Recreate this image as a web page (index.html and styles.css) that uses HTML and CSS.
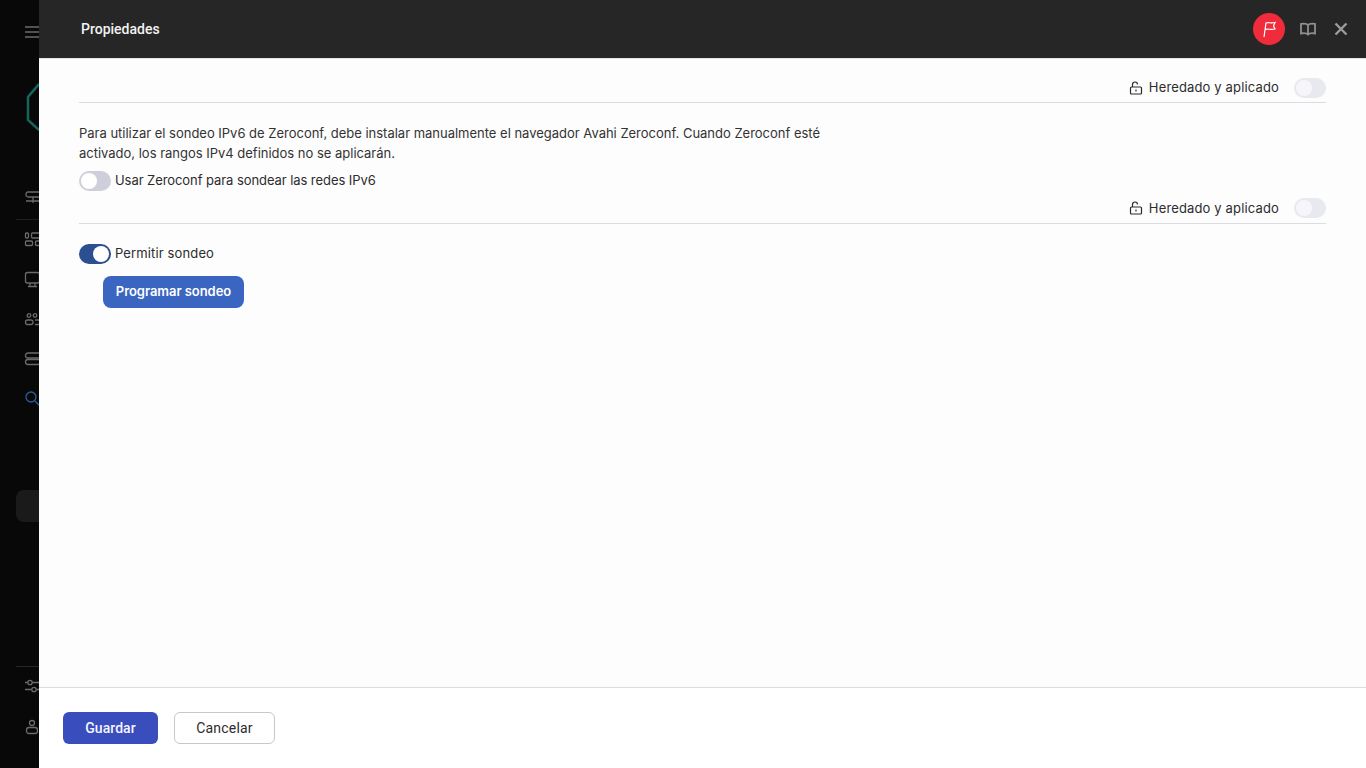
FILE: index.html
```html
<!DOCTYPE html>
<html lang="es">
<head>
<meta charset="utf-8">
<title>Propiedades</title>
<link rel="stylesheet" href="styles.css">
</head>
<body>
<div class="app">
  <aside class="sidebar">
    <svg class="side-icon burger" width="16" height="12" viewBox="0 0 16 12"><path d="M0 1h16M0 6h16M0 11h16"/></svg>
    <svg class="logo" width="30" height="50" viewBox="0 0 30 50"><path d="M16 2 5 15v23l11 10"/></svg>
    <svg class="side-icon first" width="18" height="16" viewBox="0 0 18 16"><rect x="1" y="1" width="16" height="5" rx="2"/><path d="M8 6v6M1 10h16"/></svg>
    <div class="side-rule"></div>
    <svg class="side-icon nav" width="18" height="16" viewBox="0 0 18 16"><rect x="0.500" y="1" width="3" height="5" rx="1"/><rect x="6.500" y="1" width="9" height="5" rx="1"/><rect x="0.500" y="9" width="7" height="4.500" rx="1"/><rect x="10.500" y="9" width="6" height="4.500" rx="1"/></svg>
    <svg class="side-icon nav" width="18" height="16" viewBox="0 0 18 16"><rect x="0.500" y="0.500" width="14" height="10.500" rx="2"/><path d="M5 11v3M10 11v3M3 14.500h9"/></svg>
    <svg class="side-icon nav" width="18" height="16" viewBox="0 0 18 16"><circle cx="4" cy="3.500" r="1.800"/><circle cx="10" cy="3.500" r="1.800"/><rect x="0.500" y="8" width="7.500" height="4.500" rx="2"/><path d="M10 8h3a2.200 2.200 0 0 1 0 4.500h-3"/></svg>
    <svg class="side-icon nav" width="18" height="16" viewBox="0 0 18 16"><rect x="0.500" y="1" width="15" height="5" rx="2.500"/><rect x="0.500" y="7.500" width="15" height="5" rx="2.500"/></svg>
    <svg class="side-icon search" width="18" height="18" viewBox="0 0 18 18"><circle cx="6" cy="7" r="5"/><path d="m10 11 6 6"/></svg>
    <div class="side-active"></div>
    <div class="side-rule bottom"></div>
    <svg class="side-icon sliders" width="18" height="16" viewBox="0 0 18 16"><path d="M0 2.500h2.500M7.500 2.500H18M0 9.500h6.500M11.500 9.500H18"/><circle cx="5" cy="2.500" r="2.200"/><circle cx="9" cy="9.500" r="2.200"/></svg>
    <svg class="side-icon user" width="14" height="16" viewBox="0 0 14 16"><circle cx="7" cy="3" r="2.500"/><rect x="1.500" y="7.500" width="11" height="6" rx="2.500"/></svg>
  </aside>

  <main class="panel">
    <header class="panel-header">
      <h1 class="panel-title">Propiedades</h1>
      <div class="header-actions">
        <span class="flag-badge">
          <svg width="16" height="18" viewBox="0 0 16 18"><path d="M3 17 5 3C8 1.500 9 4 14 2.500L12.500 6 14 9C9 10.500 8 8 4 9.500"/></svg>
        </span>
        <svg class="head-icon" width="16" height="14" viewBox="0 0 16 14"><path d="M8 3C6.500 1.500 4 1.500 1 2v9.500C4 11 6.500 11 8 12.500 9.500 11 12 11 15 11.500V2C12 1.500 9.500 1.500 8 3zM8 3v9.500"/></svg>
        <svg class="head-icon close" width="14" height="14" viewBox="0 0 14 14"><path d="m1.500 1.500 11 11M12.500 1.500l-11 11"/></svg>
      </div>
    </header>

    <div class="panel-body">
      <div class="inherit-row">
        <svg class="lock" width="14" height="14" viewBox="0 0 14 14"><path d="M3.500 6V3.500a2.500 2.500 0 0 1 5 0"/><rect x="1.500" y="6" width="11" height="7" rx="1"/><path d="M7 8.500v2"/></svg>
        <span class="inherit-text">Heredado y aplicado</span>
        <span class="toggle toggle-faint"><span class="knob"></span></span>
      </div>

      <p class="note">Para utilizar el sondeo IPv6 de Zeroconf, debe instalar manualmente el navegador Avahi Zeroconf. Cuando Zeroconf esté activado, los rangos IPv4 definidos no se aplicarán.</p>
      <div class="switch-row">
        <span class="toggle toggle-off"><span class="knob"></span></span>
        <span class="label-zeroconf">Usar Zeroconf para sondear las redes IPv6</span>
      </div>

      <div class="inherit-row second">
        <svg class="lock" width="14" height="14" viewBox="0 0 14 14"><path d="M3.500 6V3.500a2.500 2.500 0 0 1 5 0"/><rect x="1.500" y="6" width="11" height="7" rx="1"/><path d="M7 8.500v2"/></svg>
        <span class="inherit-text">Heredado y aplicado</span>
        <span class="toggle toggle-faint"><span class="knob"></span></span>
      </div>

      <div class="switch-row allow">
        <span class="toggle toggle-on"><span class="knob"></span></span>
        <span class="label-allow">Permitir sondeo</span>
      </div>
      <button class="btn-schedule" type="button">Programar sondeo</button>
    </div>

    <footer class="panel-footer">
      <button class="btn btn-save" type="button">Guardar</button>
      <button class="btn btn-cancel" type="button">Cancelar</button>
    </footer>
  </main>
</div>
</body>
</html>
```
FILE: styles.css
```css
* { box-sizing: border-box; }
html, body { margin: 0; height: 100%; overflow: hidden; }
body { font-family: "Inter", "Liberation Sans", sans-serif; font-size: 13px; color: #2c2c2e; }

.app { display: flex; width: 1366px; height: 768px; }

.sidebar {
  width: 39px; flex: none; height: 768px; background: #080808; overflow: hidden;
  display: flex; flex-direction: column; padding-left: 25px;
}
.side-icon { flex: none; fill: none; stroke: #6b6b6b; stroke-width: 1.300; overflow: visible; }
.burger { margin-top: 26px; }
.logo { flex: none; margin: 44px 0 0 -2px; fill: none; stroke: #14665c; stroke-width: 2.500; overflow: visible; }
.first { margin-top: 59px; }
.side-rule { flex: none; width: 30px; height: 1px; margin: 12px 0 0 -9px; background: #1e1e1e; }
.nav { margin-top: 12px; margin-bottom: 12px; }
.search { margin-top: 10px; stroke: #2f5a9e; }
.side-active { flex: none; width: 40px; height: 32px; margin: 82px 0 0 -9px; border-radius: 8px; background: #1a1a1a; }
.side-rule.bottom { margin-top: 144px; background: #262626; }
.sliders { margin-top: 13px; }
.user { margin-top: 24px; }

.panel { flex: 1; min-width: 0; display: flex; flex-direction: column; background: #fdfdfd; }

.panel-header {
  flex: none; height: 59px; background: #262626; border-bottom: 1px solid #e4e4e4;
  display: flex; align-items: center; justify-content: space-between; padding: 0 18px 0 42px;
}
.panel-title { margin: 0; font: 500 14px "Roboto", sans-serif; color: #f2f2f2; }
.header-actions { display: flex; align-items: center; }
.flag-badge {
  width: 32px; height: 32px; border-radius: 50%; background: #ef2b3c;
  display: flex; align-items: center; justify-content: center;
}
.flag-badge svg { fill: none; stroke: #fff; stroke-width: 1.200; }
.head-icon { fill: none; stroke: #8f8f8f; stroke-width: 1.800; margin-left: 15px; }
.head-icon.close { stroke: #9c9c9c; stroke-width: 2.400; margin-left: 18px; }

.panel-body { flex: 1; padding: 0 40px; }

.inherit-row {
  display: flex; align-items: center; justify-content: flex-end;
  height: 25px; margin-top: 19px; padding-bottom: 5px; border-bottom: 1px solid #d9dde2;
}
.inherit-row.second { height: 26px; margin-top: 7px; padding-bottom: 6px; border-bottom-color: #dcdce0; }
.inherit-text { letter-spacing: 0.150px; padding-bottom: 2px; }
.second .inherit-text { padding-bottom: 0; }
.lock { fill: none; stroke: #2c2c2e; stroke-width: 1.200; margin-right: 6px; }
.inherit-row .toggle { margin-left: 15px; }

.note { width: 760px; margin: 20px 0 8px; line-height: 20px; color: #333; letter-spacing: -0.010px; }

.switch-row { display: flex; align-items: center; gap: 4px; height: 20px; }
.switch-row.allow { margin-top: 20px; }
.label-zeroconf { letter-spacing: -0.070px; padding-bottom: 2px; }
.label-allow { letter-spacing: 0.130px; padding-bottom: 2px; }

.toggle { display: flex; align-items: center; width: 32px; height: 20px; border-radius: 10px; padding: 2px; flex: none; }
.knob { width: 16px; height: 16px; border-radius: 50%; background: #fff; }
.toggle-off { background: #cfcfdb; }
.toggle-faint { background: #e8e8ef; }
.toggle-faint .knob { background: #f6f6fa; }
.toggle-on { background: #2c4f92; justify-content: flex-end; }

.btn-schedule {
  display: block; margin: 12px 0 0 24px; width: 141px; height: 32px; border: 0; border-radius: 8px; padding: 0 0 2px;
  background: #3a65c0; color: #fff; font: 600 13px "Inter", sans-serif; letter-spacing: -0.050px;
}

.panel-footer {
  flex: none; height: 81px; background: #fff; border-top: 1px solid #dedede;
  display: flex; align-items: flex-start; gap: 16px; padding: 24px 0 0 24px;
}
.btn { height: 32px; border-radius: 6px; font: 500 14px "Roboto", sans-serif; letter-spacing: 0.050px; }
.btn-save { width: 95px; border: 0; background: #3a4dbd; color: #f5f5ff; }
.btn-cancel { width: 101px; border: 1px solid #c8c8c8; background: #fff; color: #2c2c2e; font-weight: 400; letter-spacing: 0.200px; }
```
